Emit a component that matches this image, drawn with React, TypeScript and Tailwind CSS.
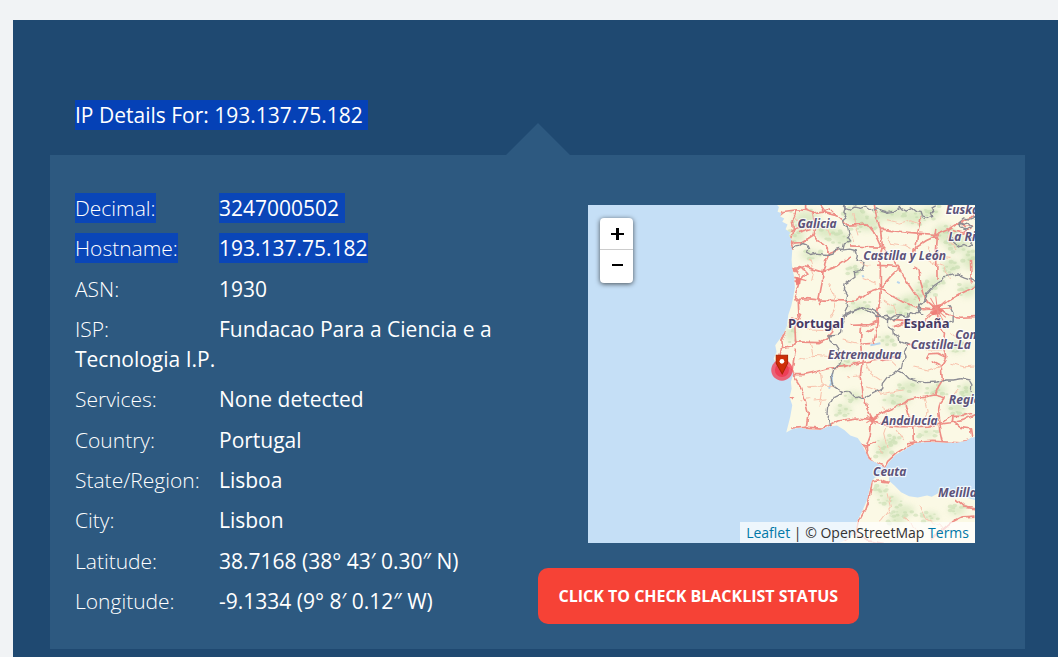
import React from "react";

type Detail = {
  label: string;
  value: string;
  selected?: boolean;
};

const details: Detail[] = [
  { label: "Decimal:", value: "3247000502 ", selected: true },
  { label: "Hostname:", value: "193.137.75.182", selected: true },
  { label: "ASN:", value: "1930" },
  { label: "ISP:", value: "Fundacao Para a Ciencia e a Tecnologia I.P." },
  { label: "Services:", value: "None detected" },
  { label: "Country:", value: "Portugal" },
  { label: "State/Region:", value: "Lisboa" },
  { label: "City:", value: "Lisbon" },
  { label: "Latitude:", value: "38.7168 (38° 43′ 0.30″ N)" },
  { label: "Longitude:", value: "-9.1334 (9° 8′ 0.12″ W)" },
];

const IBERIA =
  "M20 15 L26 22 22 36 34 40 30 50 42 56 36 66 52 74 46 88 60 98 56 108 64 118 60 132 66 150 64 180 66 205 72 232 74 262 69 292 63 318 54 345 50 378 42 398 28 418 15 436 19 456 10 476 20 492 40 500 62 508 69 522 62 545 64 566 58 592 66 616 60 650 48 697 68 686 92 683 118 689 150 690 172 680 200 676 222 690 240 706 262 714 272 728 284 752 296 778 318 788 344 804 356 786 376 764 398 752 420 738 440 728 480 726 524 728 558 728 588 722 600 714 615 710 V15 Z";
const AFRICA =
  "M305 842 L314 832 332 828 336 816 352 812 357 822 356 842 372 856 392 876 416 888 442 892 470 886 484 890 502 880 520 872 524 888 548 892 580 890 600 896 615 900 V1029 H205 L236 1014 256 996 259 966 274 936 290 900 298 866 Z";

const greens: [number, number, number, number][] = [
  [110, 60, 40, 26], [170, 95, 34, 22], [80, 110, 22, 18], [255, 45, 34, 24], [290, 70, 40, 22],
  [360, 42, 44, 20], [430, 52, 34, 22], [480, 38, 30, 16], [520, 100, 30, 26], [560, 130, 36, 26],
  [600, 180, 24, 30], [540, 200, 26, 20], [120, 165, 30, 12], [215, 115, 24, 18], [250, 210, 16, 12],
  [420, 305, 32, 20], [460, 270, 30, 18], [495, 245, 24, 14], [380, 330, 30, 14], [265, 320, 28, 12],
  [590, 270, 22, 22], [60, 400, 14, 24], [230, 490, 24, 10], [350, 420, 20, 12], [560, 440, 24, 16],
  [420, 560, 34, 16], [380, 600, 40, 14], [250, 590, 24, 14], [500, 570, 30, 14], [590, 580, 22, 32],
  [560, 620, 26, 20], [220, 630, 24, 14], [340, 745, 20, 28], [370, 720, 18, 12], [470, 700, 26, 10],
  [330, 870, 18, 12], [360, 900, 30, 12], [400, 930, 32, 14], [480, 950, 24, 12], [380, 960, 24, 16], [560, 930, 26, 12],
];

const noise = (n: number) => {
  const v = Math.sin(n * 12.9898) * 43758.5453;
  return v - Math.floor(v);
};

const speckles = greens.flatMap(([cx, cy, rx, ry], g) =>
  Array.from({ length: 9 }, (_, i) => ({
    x: Math.round(cx + (noise(g * 31 + i) - 0.5) * rx * 2.4),
    y: Math.round(cy + (noise(g * 57 + i + 400) - 0.5) * ry * 2.4),
    r: 2 + Math.round(noise(g * 17 + i + 900) * 4),
  })),
);

const borders = [
  "M66 146 L76 138 88 136 100 128 112 132 118 144 110 156 124 164 140 160 156 162 172 164 188 160 192 150 206 146 220 150 238 148 254 152 258 168 254 182 270 184 284 188 278 202 268 212 252 216 254 232 240 242 224 252 222 268 232 284 228 300 232 316 226 330 222 350 216 370 214 396 204 406 172 408 180 424 196 436 206 452 216 476 208 496 190 506 184 528 190 556 206 568 216 574 202 586 190 592 184 606 172 620 170 642 178 656 180 676",
  "M216 15 L224 24 220 36 228 48 214 60 218 76 232 84 236 102 228 112 238 126 222 132 218 150",
  "M222 24 L240 30 252 22 270 26 286 20 304 32 318 24 332 32 350 38 376 34 392 26 408 34 424 26 436 36 452 38 456 50 470 56 484 50 480 40 490 32 484 22 496 15",
  "M566 66 L576 74 592 70 604 82 590 90 572 84 566 66 580 54 600 58 615 52 M540 108 L552 116 548 130 562 140 578 134 594 142 606 134 598 120 612 110",
  "M226 350 L244 340 260 332 280 320 300 328 318 336 332 350 354 360 372 348 390 346 410 352 424 338 438 344 452 328 448 316 460 306 472 280 490 258 510 244 518 230 538 228 560 222 582 232 600 238 615 246",
  "M216 350 L240 338 276 326 300 336 322 350 348 346 368 362 388 348 408 350 416 340",
  "M448 316 L444 334 456 344 M536 316 L548 340 548 366 530 370",
  "M355 352 L354 380 370 390 372 404 386 412 388 424 412 434 402 456 410 472 396 488 394 500 384 510 370 522 350 532 336 550 334 566 318 576 302 584 284 596 266 588 250 590 236 576 216 574",
  "M384 512 L400 520 416 536 440 544 468 548 500 546 524 540 552 540 576 536 596 540 604 554 602 576",
];

const mainRoads = [
  "M15 55 L40 35 80 30 106 32 128 40 160 34 178 28 196 46 214 60 M106 15 V32 M80 30 L66 60 70 95 62 125 68 150 M60 96 L80 84 100 82 118 74",
  "M128 40 L134 80 128 108 144 124 164 142 178 158 204 148 M150 15 L168 40 198 48 M86 98 L124 86 M128 108 L96 128 66 130",
  "M178 158 L164 190 158 216 156 246 146 296 148 316 M68 206 L104 200 156 216 200 198 232 176 242 168 M72 232 L108 242 M66 200 L86 228 84 260 72 290 84 300 86 350",
  "M70 216 L84 200 100 208 110 220 98 232 84 250 70 240 M72 300 L108 296 146 300 196 302 256 304 292 278 326 266 368 290 404 310 444 322 500 328",
  "M214 62 L232 76 266 74 290 72 308 94 320 116 332 142 M236 138 L276 140 330 142 M312 15 L318 50 330 88 336 140",
  "M332 88 L376 94 440 100 498 104 532 90 568 66 600 54 615 40 M496 90 L494 104 500 120 498 150 500 240 M502 106 L468 122 428 148 426 180 M452 50 L442 100 438 130 432 154",
  "M336 140 L328 176 330 200 330 264 M336 142 L356 166 386 204 360 230 330 264 M386 204 L408 244 440 292 450 304 M320 196 L380 200 M428 204 L446 214 450 244 456 264 466 300 500 328",
  "M330 264 L328 300 322 336 324 368 M600 180 L602 248 M568 66 L584 80 604 78 M545 92 L580 100 600 86",
  "M500 328 L540 300 578 278 615 260 M500 328 L504 376 522 400 518 438 526 472 512 498 516 540 504 560 494 584 M500 328 L462 364 430 366 368 362 M500 328 L540 348 570 352 615 350",
  "M324 364 L298 374 244 376 M324 366 L310 430 276 432 M310 380 L290 398 M274 370 L270 430 276 480 270 530 278 580 288 622 304 652 300 694 M370 380 L392 372 440 364",
  "M52 370 L66 356 84 360 92 340 M84 360 L74 384 76 426 64 440 34 446 32 420 46 390 M34 446 L24 480 36 520 66 524 100 524 134 516 172 506 218 500 260 490 284 486 340 478 390 470",
  "M76 426 L144 428 168 414 184 396 186 372 M76 446 L70 480 66 510 72 530 90 558 100 586 114 640 108 680 M60 594 L66 600 M54 596 L68 590 M66 520 L50 500",
  "M66 684 L116 682 160 684 204 662 258 654 304 658 M304 658 L324 650 M304 658 L330 640 366 624 400 610 412 600 454 590 492 582 524 590 510 608 502 640 508 690 516 726",
  "M304 658 L300 704 288 738 290 768 M304 660 L346 676 386 680 430 680 432 724 M404 612 L412 642 432 666 M266 734 L288 738 318 726 M292 770 L312 786 344 800 352 784 380 758 430 726",
  "M410 728 L440 726 490 724 530 726 570 728 600 722 M432 680 L470 678 508 672 540 668 580 660 615 642 M516 666 L548 646 580 646 602 640 M548 646 L546 664 570 682 600 686 604 714 M526 472 L500 460 478 462 468 480 M484 484 L510 498 M406 434 L440 440",
  "M305 842 L330 838 354 848 M332 838 L334 846 356 848 358 832 M305 842 L298 884 284 930 264 966 256 1000 290 1022 340 1029 M480 1020 L500 1000 540 968 576 950 615 948 M556 900 L580 920 615 926 M256 996 L220 1020",
];

const minorRoads = [
  "M66 40 L90 68 110 78 M180 60 L170 84 180 108 M250 40 L258 80 266 110 M350 60 L390 70 420 60 450 70 M360 110 L356 130 400 136 420 146 M240 98 L250 126",
  "M120 180 L130 220 124 246 M176 250 L190 280 196 320 180 350 M264 190 L300 196 M280 236 L320 250 M340 300 L370 320 380 350 M470 140 L490 170 540 176 M470 180 L520 200 540 240 M540 80 L530 120 560 150",
  "M96 370 L120 390 160 392 M120 430 L130 470 M90 480 L130 466 180 470 200 460 M110 560 L150 558 196 560 M130 600 L170 596 M90 600 L120 596 M150 516 L156 560 146 620 M220 420 L270 432",
  "M284 486 L300 520 330 540 M230 530 L270 528 M290 560 L340 580 400 570 M360 480 L380 500 M430 500 L470 510 510 500 M440 440 L470 450 520 450 M540 400 L570 420 M540 490 L580 500 615 498",
  "M340 620 L350 670 340 700 350 744 M380 690 L400 720 M460 590 L470 630 460 670 M560 570 L540 600 M320 740 L340 760 M350 880 L360 920 330 960 M400 950 L440 990 M450 920 L470 960 520 980",
];

const places: { name: string; x: number; y: number; country?: boolean }[] = [
  { name: "Galicia", x: 82, y: 86 },
  { name: "Euskadi", x: 526, y: 42 },
  { name: "La Rioja", x: 533, y: 124 },
  { name: "Castilla y León", x: 279, y: 180 },
  { name: "Portugal", x: 53, y: 383, country: true },
  { name: "España", x: 399, y: 385, country: true },
  { name: "Comunidad", x: 554, y: 418 },
  { name: "Castilla-La", x: 421, y: 447 },
  { name: "Extremadura", x: 172, y: 476 },
  { name: "Región", x: 535, y: 612 },
  { name: "Andalucía", x: 333, y: 675 },
  { name: "Ceuta", x: 308, y: 829 },
  { name: "Melilla", x: 503, y: 891 },
];

function MapDrawing() {
  return (
    <svg
      viewBox="-546 15 1161 1014"
      preserveAspectRatio="xMaxYMid slice"
      className="block h-full w-full bg-[#c5dff6]"
      role="img"
      aria-label="Portugal"
    >
      <defs>
        <clipPath id="land">
          <path d={IBERIA} />
          <path d={AFRICA} />
        </clipPath>
        <filter id="soft" x="-50%" y="-50%" width="200%" height="200%">
          <feGaussianBlur stdDeviation="9" />
        </filter>
        <filter id="wiggle" x="-5%" y="-5%" width="110%" height="110%">
          <feTurbulence type="fractalNoise" baseFrequency="0.04" numOctaves="2" seed="4" result="n" />
          <feDisplacementMap in="SourceGraphic" in2="n" scale="16" xChannelSelector="R" yChannelSelector="G" />
        </filter>
      </defs>
      <path d={IBERIA} fill="#fbf9e5" />
      <path d={AFRICA} fill="#fbf9e5" />
      <g clipPath="url(#land)">
        <g fill="#d5e6bd" opacity="0.8" filter="url(#soft)">
          {greens.map(([cx, cy, rx, ry]) => (
            <ellipse key={cx + "-" + cy} cx={cx} cy={cy} rx={rx} ry={ry} />
          ))}
        </g>
        <g fill="#b4d29f" opacity="0.4">
          {speckles.map((s, i) => (
            <ellipse key={i} cx={s.x} cy={s.y} rx={s.r + 2} ry={s.r} />
          ))}
        </g>
        <path
          d="M186 520 L184 546 176 566 M180 540 L188 552 M276 226 L280 232 M380 246 L388 250 M300 436 L330 430"
          fill="none"
          stroke="#b5d4ee"
          strokeWidth="6"
        />
        <g filter="url(#wiggle)" fill="none" strokeLinejoin="round">
          <g stroke="#f8c3ad" strokeWidth="3">
            {minorRoads.map((d) => (
              <path key={d} d={d} />
            ))}
          </g>
          <g stroke="#ee8e86" strokeWidth="5">
            {mainRoads.map((d) => (
              <path key={d} d={d} />
            ))}
          </g>
          <g stroke="#8b8b93" strokeWidth="4">
            {borders.map((d) => (
              <path key={d} d={d} />
            ))}
          </g>
        </g>
        <path
          d="M484 318 L512 312 508 324 520 330 508 342 486 346 478 336 490 330Z M76 232 L92 236 90 252 78 256Z M298 648 L312 654 308 666 298 664Z"
          fill="#ef7e78"
        />
        <path
          d="M470 304 L526 352 M526 302 L468 350 M496 290 L504 362 M456 330 L544 324 M480 294 L518 362 M290 646 L316 672 M320 648 L288 668 M280 732 L300 780"
          fill="none"
          stroke="#ef8f86"
          strokeWidth="3"
        />
      </g>
      <g stroke="#ffffff" strokeOpacity="0.75" strokeWidth="7" strokeLinejoin="round" paintOrder="stroke">
        {places.map((p) => (
          <text
            key={p.name}
            x={p.x}
            y={p.y}
            fill={p.country ? "#473a63" : "#5d5379"}
            fontSize={p.country ? 39 : 36}
            className={
              p.country
                ? "font-['Noto_Sans',sans-serif] font-bold"
                : "font-['Noto_Sans',sans-serif] font-bold italic"
            }
          >
            {p.name}
          </text>
        ))}
      </g>
      <circle cx="35" cy="510" r="32" fill="#f5384d" fillOpacity="0.75" />
      <circle cx="35" cy="510" r="21" fill="#f03048" fillOpacity="0.7" />
      <path d="M18 466 H52 V490 L36 522 18 490Z" fill="#ce2f08" stroke="#aa2404" strokeWidth="3" />
      <circle cx="35" cy="484" r="7" fill="#ffffff" />
    </svg>
  );
}

function MapView() {
  return (
    <div className="relative mx-[50px] h-[338px] overflow-hidden">
      <MapDrawing />
      <div className="absolute top-[13px] left-3 flex w-[33px] flex-col overflow-hidden rounded bg-white text-black shadow-[0_1px_5px_rgba(0,0,0,0.65)]">
        <button type="button" aria-label="Zoom in" className="flex h-8 items-center justify-center border-b border-[#cccccc] pl-0.5">
          <svg width="13" height="12" viewBox="0 0 13 12" shapeRendering="crispEdges">
            <path d="M0 5h13v2H0zM5 0h3v12H5z" />
          </svg>
        </button>
        <button type="button" aria-label="Zoom out" className="flex h-[33px] items-center justify-center pl-0.5">
          <svg width="11" height="5" viewBox="0 0 11 5" shapeRendering="crispEdges">
            <path d="M0 0h11v2H0z" />
          </svg>
        </button>
      </div>
      <div className="absolute right-0 bottom-0 bg-white/70 px-1.5 text-sm leading-[21px] whitespace-nowrap text-[#333333]">
        <a href="#leaflet" className="text-[#0078a8]">Leaflet</a> | © OpenStreetMap{" "}
        <a href="#terms" className="text-[#0078a8]">Terms</a>
      </div>
    </div>
  );
}

function DetailRow({ label, value, selected }: Detail) {
  const mark = selected ? "inline-block whitespace-pre bg-[#0a46b8]" : "";
  return (
    <p>
      <span className="inline-block w-36 font-light">
        <span className={mark}>{label}</span>
      </span>
      <span className={mark}>{value}</span>
    </p>
  );
}

export default function App() {
  return (
    <div className="min-h-screen bg-[#f1f3f5] pt-5 pl-[13px] font-['Open_Sans',sans-serif] text-white">
      <main className="min-h-[637px] bg-[#1f4971] pt-20 pr-[33px] pb-2 pl-[37px]">
        <h1 className="px-[25px] text-[21px] leading-[30px] font-medium">
          <span className="inline-block bg-[#0541b6] whitespace-pre">IP Details For: 193.137.75.182 </span>
        </h1>
        <div className="-mt-[7px] flex justify-center">
          <svg width="64" height="32" viewBox="0 0 64 32" aria-hidden="true">
            <path d="M0 32L32 0l32 32z" fill="#2d5980" />
          </svg>
        </div>
        <section className="grid grid-cols-2 bg-[#2d5980] pb-[25px]">
          <div className="flex flex-col justify-between pt-[38px] pr-[25px] pb-2 pl-[25px] text-[21px] leading-[30px] font-medium">
            {details.map((d) => (
              <DetailRow key={d.label} {...d} />
            ))}
          </div>
          <div className="flex flex-col items-stretch gap-[25px] pt-[50px]">
            <MapView />
            <button
              type="button"
              className="h-14 self-start rounded-[10px] bg-[#f64236] px-[21px] text-base font-bold"
            >
              CLICK TO CHECK BLACKLIST STATUS
            </button>
          </div>
        </section>
      </main>
    </div>
  );
}
